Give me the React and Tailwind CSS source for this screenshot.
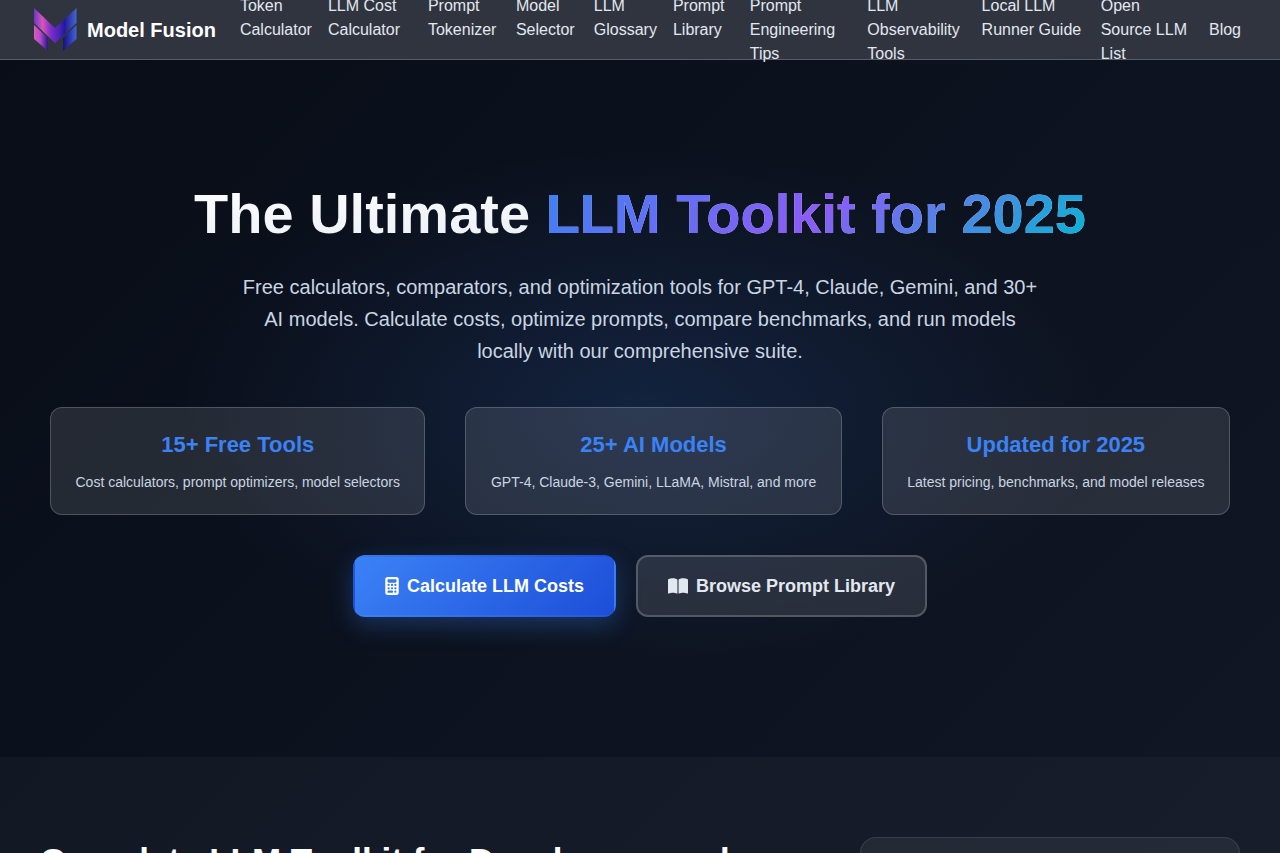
import { FaCalculator, FaBookOpen } from 'react-icons/fa6'

const navLinks = [
  'Token Calculator',
  'LLM Cost Calculator',
  'Prompt Tokenizer',
  'Model Selector',
  'LLM Glossary',
  'Prompt Library',
  'Prompt Engineering Tips',
  'LLM Observability Tools',
  'Local LLM Runner Guide',
  'Open Source LLM List',
]

const stats = [
  { title: '15+ Free Tools', text: 'Cost calculators, prompt optimizers, model selectors' },
  { title: '25+ AI Models', text: 'GPT-4, Claude-3, Gemini, LLaMA, Mistral, and more' },
  { title: 'Updated for 2025', text: 'Latest pricing, benchmarks, and model releases' },
]

function Logo() {
  return (
    <svg width="44" height="44" viewBox="0 0 44 44" aria-hidden="true">
      <defs>
        <linearGradient id="band" x1="0" y1="0" x2="1" y2="0">
          <stop offset="0" stopColor="#6d35c8" />
          <stop offset="0.2" stopColor="#d457b8" />
          <stop offset="0.4" stopColor="#7a2cc8" />
          <stop offset="0.6" stopColor="#4a22b8" />
          <stop offset="0.72" stopColor="#221a98" />
          <stop offset="1" stopColor="#4568cc" />
        </linearGradient>
        <linearGradient id="left" x1="0" y1="0" x2="1" y2="0">
          <stop offset="0" stopColor="#d65cc0" />
          <stop offset="0.45" stopColor="#b04acb" />
          <stop offset="1" stopColor="#2a1680" />
        </linearGradient>
        <linearGradient id="right" x1="0" y1="0" x2="1" y2="0">
          <stop offset="0" stopColor="#181270" />
          <stop offset="0.5" stopColor="#2c34b4" />
          <stop offset="1" stopColor="#4367cc" />
        </linearGradient>
      </defs>
      <path d="M1 0L22 20L43.500 0V15L22 35L1 15Z" fill="url(#band)" />
      <path d="M1 17L15 30V43L1 31Z" fill="url(#left)" />
      <path d="M43.500 17L30 30V43L43.500 31Z" fill="url(#right)" />
    </svg>
  )
}

function Header() {
  return (
    <header className="h-[60px] border-b border-white/20 bg-[#30343f] px-[33px]">
      <div className="flex h-full items-center gap-6">
        <a href="#" className="flex shrink-0 items-center gap-2.5 text-xl font-bold text-white">
          <Logo />
          Model Fusion
        </a>
        <nav className="min-w-0 flex-1 pr-1.5">
          <ul className="flex gap-4">
            {navLinks.map((label) => (
              <li key={label}>
                <a href="#" className="block text-base text-slate-200">{label}</a>
              </li>
            ))}
            <li className="self-center">
              <a href="#" className="block text-base text-slate-200">Blog</a>
            </li>
          </ul>
        </nav>
      </div>
    </header>
  )
}

function Hero() {
  return (
    <section className="bg-[radial-gradient(460px_260px_at_50%_50%,rgba(59,130,246,0.15),transparent)] px-[50px] pt-[120px] pb-[140px] text-center">
      <h1 className="bg-gradient-to-br from-white to-slate-200 bg-clip-text text-[56px] leading-[67px] font-bold text-transparent">
        The Ultimate{' '}
        <span className="bg-[linear-gradient(135deg,#3b82f6_0%,#8b5cf6_50%,#06b6d4_100%)] bg-clip-text">
          LLM Toolkit for 2025
        </span>
      </h1>
      <p className="mx-auto mt-6 max-w-[800px] text-xl leading-8 text-slate-300">
        Free calculators, comparators, and optimization tools for GPT-4, Claude, Gemini, and 30+ AI models. Calculate
        costs, optimize prompts, compare benchmarks, and run models locally with our comprehensive suite.
      </p>
      <div className="mt-10 flex gap-10">
        {stats.map((stat) => (
          <div key={stat.title} className="flex-auto rounded-xl border border-white/20 bg-white/11 p-5">
            <h3 className="text-[22px] leading-[34px] font-bold text-[#3b82f6]">{stat.title}</h3>
            <p className="mt-2 text-sm leading-6 text-slate-300">{stat.text}</p>
          </div>
        ))}
      </div>
      <div className="mt-10 flex justify-center gap-5">
        <button className="flex h-[62px] items-center gap-2 rounded-xl border-2 border-transparent bg-[linear-gradient(135deg,#3b82f6,#1d4ed8)] px-[30px] text-lg font-bold text-white shadow-[0_8px_25px_rgba(59,130,246,0.3)]">
          <FaCalculator className="h-[18px] w-[14px]" />
          Calculate LLM Costs
        </button>
        <button className="flex h-[62px] items-center gap-2 rounded-xl border-2 border-white/20 bg-white/11 px-[30px] text-lg font-bold text-slate-200">
          <FaBookOpen className="h-[18px] w-5" />
          Browse Prompt Library
        </button>
      </div>
    </section>
  )
}

function Overview() {
  return (
    <section className="bg-white/3 px-10 py-20">
      <div className="grid grid-cols-[2fr_1fr] items-start gap-[60px]">
        <h2 className="text-[35px] leading-[48px] font-bold text-white">
          Complete LLM Toolkit for Developers and Businesses
        </h2>
        <div className="h-60 rounded-2xl border border-white/10 bg-white/6" />
      </div>
    </section>
  )
}

export default function App() {
  return (
    <div className="min-h-screen bg-[linear-gradient(135deg,#080d17_0%,#111827_100%)] font-['Liberation_Sans',Arial,sans-serif]">
      <Header />
      <main>
        <Hero />
        <Overview />
      </main>
    </div>
  )
}
